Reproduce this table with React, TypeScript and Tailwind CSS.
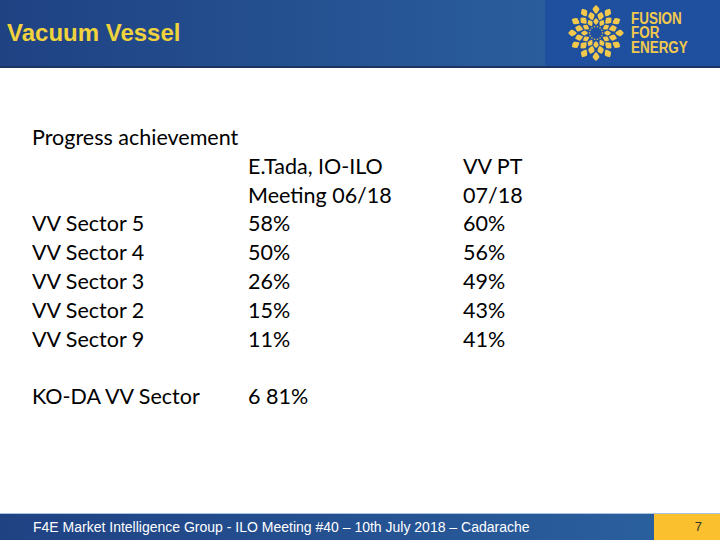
import React from "react";

const ROWS = [
  ["VV Sector 5", "58%", "60%"],
  ["VV Sector 4", "50%", "56%"],
  ["VV Sector 3", "26%", "49%"],
  ["VV Sector 2", "15%", "43%"],
  ["VV Sector 9", "11%", "41%"],
];

function Logo() {
  const rings = [
    { r: 11.5, n: 12, off: 0, s: 3.6, w: 0.8 },
    { r: 17.5, n: 12, off: 15, s: 4.2, w: 0.85 },
    { r: 23.5, n: 12, off: 0, s: 4.4, w: 0.85 },
  ];
  const dots = Array.from({ length: 14 }, (_, i) => (i * 360) / 14);
  return (
    <svg width="58" height="58" viewBox="-29 -29 58 58">
      {rings.map((ring, ri) =>
        Array.from({ length: ring.n }, (_, i) => {
          const a = ring.off + (i * 360) / ring.n;
          const s = ring.s;
          const w = s * ring.w;
          return (
            <g key={`${ri}-${i}`} transform={`rotate(${a}) translate(0 ${-ring.r})`}>
              <path
                d={`M0 ${-s} Q${w} ${-s * 0.3} ${w * 0.9} 0 Q${w * 0.6} ${s * 0.6} 0 ${s} Q${-w * 0.6} ${s * 0.6} ${-w * 0.9} 0 Q${-w} ${-s * 0.3} 0 ${-s} Z`}
                fill="#f2c94c"
              />
            </g>
          );
        })
      )}
      {dots.map((a, i) => (
        <circle
          key={i}
          cx={Math.cos((a * Math.PI) / 180) * 6.5}
          cy={Math.sin((a * Math.PI) / 180) * 6.5}
          r="0.75"
          fill="#f2c94c"
        />
      ))}
    </svg>
  );
}

export default function App() {
  return (
    <div className="w-[720px] h-[540px] bg-white flex flex-col overflow-hidden">
      {/* Header */}
      <div className="h-[68px] flex shrink-0 border-b-2 border-[#1c3560]">
        <div className="flex-1 flex items-center pl-[7px] bg-gradient-to-r from-[#1f4283] to-[#2a5d9c]">
          <span
            className="text-[24px] font-bold text-[#f0d33c] pb-[1px]"
            style={{ fontFamily: "'Liberation Sans', Arial, sans-serif" }}
          >
            Vacuum Vessel
          </span>
        </div>
        <div className="w-[175px] bg-[#1f4f9f] flex items-center pl-[22px] gap-[6px]">
          <Logo />
          <div
            className="flex flex-col text-[#f2c94c] font-bold text-[16px] leading-[14.5px] pt-[1px] scale-x-[0.84] origin-left"
            style={{ fontFamily: "'Liberation Sans', Arial, sans-serif" }}
          >
            <span>FUSION</span>
            <span>FOR</span>
            <span>ENERGY</span>
          </div>
        </div>
      </div>

      {/* Body */}
      <div
        className="flex-1 pl-[32px] pt-[55px] text-[21.5px] leading-[28.8px] text-black"
        style={{ fontFamily: "Lato, 'Open Sans', sans-serif" }}
      >
        <div>Progress achievement</div>
        <div className="grid grid-cols-[216px_215px_auto]">
          <div />
          <div>
            E.Tada, IO-ILO
            <br />
            Meeting 06/18
          </div>
          <div>
            VV PT
            <br />
            07/18
          </div>
          {ROWS.map((row) => (
            <React.Fragment key={row[0]}>
              <div>{row[0]}</div>
              <div>{row[1]}</div>
              <div>{row[2]}</div>
            </React.Fragment>
          ))}
          <div className="h-[28.8px] col-span-3" />
          <div>KO-DA VV Sector</div>
          <div>6 81%</div>
          <div />
        </div>
      </div>

      {/* Footer */}
      <div
        className="h-[27px] flex shrink-0 border-t border-[#a9c4e0] text-[14px]"
        style={{ fontFamily: "'Liberation Sans', Arial, sans-serif" }}
      >
        <div className="flex-1 flex items-center pl-[33px] text-white bg-gradient-to-r from-[#1f4283] to-[#2a5f9e]">
          F4E Market Intelligence Group - ILO Meeting #40 – 10th July 2018 – Cadarache
        </div>
        <div className="w-[66px] bg-[#fbc02d] flex items-center justify-end pr-[18px] text-[#333] text-[13px]">
          7
        </div>
      </div>
    </div>
  );
}
